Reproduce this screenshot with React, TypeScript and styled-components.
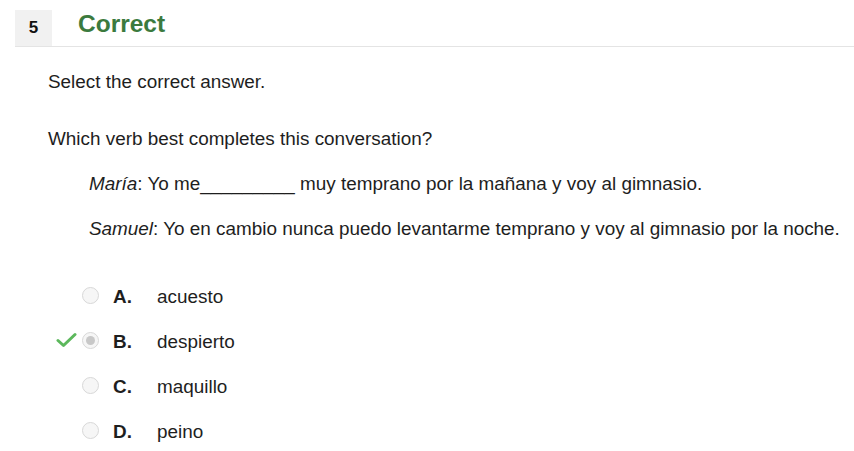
import React from "react";
import styled, { createGlobalStyle } from "styled-components";

const Global = createGlobalStyle`
  html, body { margin: 0; padding: 0; background: #fff; }
  body { font-family: "Liberation Sans", Arial, sans-serif; color: #1e1e1e; }
`;

const Page = styled.div`
  width: 854px;
  height: 451px;
  overflow: hidden;
`;

const Header = styled.div`
  display: flex;
  align-items: center;
  margin: 10px 0 0 15px;
  height: 36px;
  border-bottom: 1px solid #e4e4e4;
`;

const NumBox = styled.div`
  width: 37px;
  height: 36px;
  background: #f1f1f1;
  display: flex;
  align-items: center;
  justify-content: center;
  font-weight: bold;
  font-size: 17px;
  color: #111;
`;

const Title = styled.div`
  margin-left: 26px;
  font-size: 24.5px;
  font-weight: bold;
  color: #3b7a3e;
  margin-top: -8px;
`;

const Body = styled.div`
  padding-left: 48px;
  font-size: 18.9px;
  line-height: 20px;
`;

const Para = styled.p<{ $top: number; $indent?: number }>`
  margin: ${(p) => p.$top}px 0 0 ${(p) => p.$indent ?? 0}px;
  white-space: nowrap;
`;

const Options = styled.div`
  display: flex;
  flex-direction: column;
  gap: 25px;
  margin-top: 48px;
`;

const Option = styled.div`
  display: flex;
  align-items: center;
  height: 20px;
`;

const Mark = styled.div`
  width: 34px;
  display: flex;
  align-items: center;
  justify-content: flex-start;
  padding-left: 8px;
  box-sizing: border-box;
  margin-top: -4px;
`;

const Radio = styled.div<{ $checked?: boolean }>`
  width: 17px;
  height: 17px;
  border-radius: 50%;
  border: 1px solid #d8d8d8;
  background: #f6f6f6;
  box-sizing: border-box;
  display: flex;
  align-items: center;
  justify-content: center;
  margin-top: -4px;
  &::after {
    content: "";
    display: ${(p) => (p.$checked ? "block" : "none")};
    width: 9px;
    height: 9px;
    border-radius: 50%;
    background: #c8c8c8;
  }
`;

const Letter = styled.span`
  font-weight: bold;
  margin-left: 14px;
  width: 44px;
`;

const Check = () => (
  <svg width="21" height="16" viewBox="0 0 21 16">
    <path d="M2 8.5 L7.5 13.5 L19 2.5" fill="none" stroke="#5cb85c" strokeWidth="3" strokeLinecap="round" strokeLinejoin="round" />
  </svg>
);

const options = [
  { l: "A.", t: "acuesto" },
  { l: "B.", t: "despierto", checked: true },
  { l: "C.", t: "maquillo" },
  { l: "D.", t: "peino" },
];

export default function App() {
  return (
    <Page>
      <Global />
      <Header>
        <NumBox>5</NumBox>
        <Title>Correct</Title>
      </Header>
      <Body>
        <Para $top={25}>Select the correct answer.</Para>
        <Para $top={37}>Which verb best completes this conversation?</Para>
        <Para $top={25} $indent={41}>
          <i>María</i>: Yo me_________ muy temprano por la mañana y voy al gimnasio.
        </Para>
        <Para $top={25} $indent={41}>
          <i>Samuel</i>: Yo en cambio nunca puedo levantarme temprano y voy al gimnasio por la noche.
        </Para>
        <Options>
          {options.map((o) => (
            <Option key={o.l}>
              <Mark>{o.checked ? <Check /> : null}</Mark>
              <Radio $checked={o.checked} />
              <Letter>{o.l}</Letter>
              <span>{o.t}</span>
            </Option>
          ))}
        </Options>
      </Body>
    </Page>
  );
}
